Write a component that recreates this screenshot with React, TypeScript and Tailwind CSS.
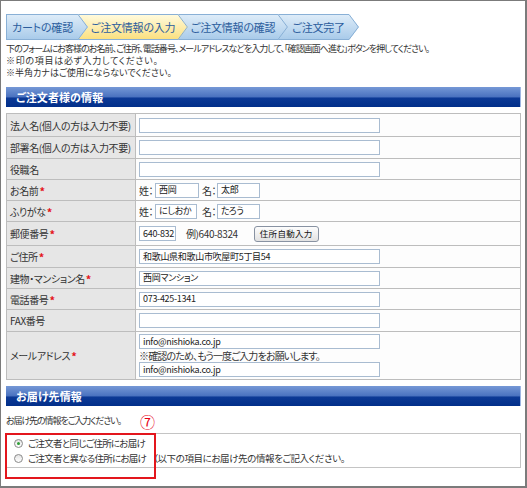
import React from "react";

type Tone = "blue" | "yellow";

const STOPS: Record<Tone, [string, string]> = {
  blue: ["#deecf8", "#a9cbea"],
  yellow: ["#fffadc", "#fbe07f"],
};

// Arrow-shaped joint between two breadcrumb steps
function Joint({ from, to, id }: { from: Tone; to: Tone | "none"; id: string }) {
  return (
    <svg width="10" height="26" viewBox="0 0 10 26" className="block shrink-0">
      <defs>
        <linearGradient id={`${id}-a`} x1="0" y1="0" x2="0" y2="1">
          <stop offset="0" stopColor={STOPS[from][0]} />
          <stop offset="1" stopColor={STOPS[from][1]} />
        </linearGradient>
        {to !== "none" && (
          <linearGradient id={`${id}-b`} x1="0" y1="0" x2="0" y2="1">
            <stop offset="0" stopColor={STOPS[to][0]} />
            <stop offset="1" stopColor={STOPS[to][1]} />
          </linearGradient>
        )}
      </defs>
      {to !== "none" && <rect x="0" y="0" width="10" height="26" fill={`url(#${id}-b)`} />}
      {to !== "none" && <path d="M0 0.5H10M0 25.5H10" stroke="#89b0d6" strokeWidth="1" />}
      <path d="M0 0L10 13L0 26Z" fill={`url(#${id}-a)`} />
      <path d="M0 0.5L9.4 13L0 25.5" fill="none" stroke="#89b0d6" strokeWidth="1" />
    </svg>
  );
}

function Step({ tone, className, children }: { tone: Tone; className: string; children: React.ReactNode }) {
  const bg =
    tone === "blue"
      ? "bg-linear-to-b from-[#deecf8] to-[#a9cbea]"
      : "bg-linear-to-b from-[#fffadc] to-[#fbe07f]";
  return (
    <div
      className={`h-[26px] border-y border-[#89b0d6] ${bg} flex items-center justify-center text-[11px] text-[#2c5d9d] tracking-[-0.2px] ${className}`}
    >
      {children}
    </div>
  );
}

function SectionBar({ children }: { children: React.ReactNode }) {
  return (
    <div className="h-[20px] flex items-center pl-[10px] bg-[linear-gradient(to_bottom,#7598d6_0%,#4b73c0_48%,#0c3995_56%,#022f8a_100%)] border-r border-[#9fb6e3] text-white text-[11px] font-bold tracking-[0.1px]">
      {children}
    </div>
  );
}

function Field({ className, children }: { className: string; children?: React.ReactNode }) {
  return (
    <div
      className={`h-[15px] border border-[#a9bcd1] bg-white flex items-center pl-[3px] overflow-hidden whitespace-nowrap text-[9px] text-[#222] tracking-[-0.3px] ${className}`}
    >
      {children}
    </div>
  );
}

function Req() {
  return <span className="text-[#e4151c] font-bold text-[11px] relative top-[1px] ml-[1px]">*</span>;
}

type Row = { label: string; req?: boolean; h: string; body: React.ReactNode };

const rows: Row[] = [
  { label: "法人名(個人の方は入力不要)", h: "h-[23px]", body: <Field className="w-[241px]" /> },
  { label: "部署名(個人の方は入力不要)", h: "h-[22px]", body: <Field className="w-[241px]" /> },
  { label: "役職名", h: "h-[21px]", body: <Field className="w-[241px]" /> },
  {
    label: "お名前",
    req: true,
    h: "h-[21px]",
    body: (
      <div className="flex items-center">
        <span className="w-[16px]">姓：</span>
        <Field className="w-[44px]">西岡</Field>
        <span className="w-[15px] ml-[3px]">名：</span>
        <Field className="w-[43px]">太郎</Field>
      </div>
    ),
  },
  {
    label: "ふりがな",
    req: true,
    h: "h-[21px]",
    body: (
      <div className="flex items-center">
        <span className="w-[16px]">姓：</span>
        <Field className="w-[42px]">にしおか</Field>
        <span className="w-[15px] ml-[5px]">名：</span>
        <Field className="w-[43px]">たろう</Field>
      </div>
    ),
  },
  {
    label: "郵便番号",
    req: true,
    h: "h-[24px]",
    body: (
      <div className="flex items-center">
        <Field className="w-[37px]">640-832</Field>
        <span className="ml-[10px]">例)640-8324</span>
        <button className="ml-[16px] h-[16px] w-[65px] rounded-[3px] border border-[#8892a2] bg-linear-to-b from-[#fdfdfd] to-[#e2e2e2] text-[8.5px] text-[#111] leading-none tracking-[0.3px]">
          住所自動入力
        </button>
      </div>
    ),
  },
  { label: "ご住所", req: true, h: "h-[22px]", body: <Field className="w-[241px]">和歌山県和歌山市吹屋町5丁目54</Field> },
  { label: "建物・マンション名", req: true, h: "h-[21px]", body: <Field className="w-[241px]">西岡マンション</Field> },
  { label: "電話番号", req: true, h: "h-[21px]", body: <Field className="w-[241px]">073-425-1341</Field> },
  { label: "FAX番号", h: "h-[22px]", body: <Field className="w-[241px]" /> },
  {
    label: "メールアドレス",
    req: true,
    h: "h-[48px]",
    body: (
      <div className="flex flex-col">
        <Field className="w-[241px]">info@nishioka.co.jp</Field>
        <div className="h-[13px] leading-[13px] tracking-[-0.85px]">※確認のため、もう一度ご入力をお願いします。</div>
        <Field className="w-[241px]">info@nishioka.co.jp</Field>
      </div>
    ),
  },
];

function Radio({ on }: { on?: boolean }) {
  return (
    <span className="w-[9px] h-[9px] rounded-full border border-[#8a8a8a] bg-linear-to-b from-[#e4e4e4] to-white flex items-center justify-center shrink-0">
      {on && <span className="w-[3px] h-[3px] rounded-full bg-[#2e9e36]" />}
    </span>
  );
}

export default function App() {
  return (
    <div className="w-[527px] h-[488px] overflow-hidden bg-white border-l border-t border-r-2 border-b-2 border-[#7b7b7b] pl-[5px] pr-[4px] pt-[13px] font-['Noto_Sans_CJK_JP',sans-serif] text-[#333] [font-feature-settings:'palt'] relative">
      {/* progress steps */}
      <div className="flex">
        <Step tone="blue" className="w-[72px] border-l">カートの確認</Step>
        <Joint from="blue" to="yellow" id="j1" />
        <Step tone="yellow" className="w-[90px]">ご注文情報の入力</Step>
        <Joint from="yellow" to="blue" id="j2" />
        <Step tone="blue" className="w-[90px]">ご注文情報の確認</Step>
        <Joint from="blue" to="blue" id="j3" />
        <Step tone="blue" className="w-[61px]">ご注文完了</Step>
        <Joint from="blue" to="none" id="j4" />
      </div>

      <div className="mt-[3px] text-[9px] leading-[12px] whitespace-nowrap">
        <p className="h-[12px] tracking-[-0.95px]">下のフォームにお客様のお名前、ご住所、電話番号、メールアドレスなどを入力して、「確認画面へ進む」ボタンを押してください。</p>
        <p className="h-[12px] tracking-[0.7px]">※印の項目は必ず入力してください。</p>
        <p className="h-[12px] tracking-[0px]">※半角カナはご使用にならないでください。</p>
      </div>

      <div className="mt-[8px]">
        <SectionBar>ご注文者様の情報</SectionBar>
      </div>

      {/* orderer form */}
      <div className="mt-[6px] grid grid-cols-[129px_1fr] border-t border-l border-[#bdbdbd] text-[10px] tracking-[-0.4px]">
        {rows.map((r) => (
          <React.Fragment key={r.label}>
            <div className={`${r.h} bg-[#e6e6e6] border-r border-b border-[#bdbdbd] pl-[3px] flex items-center whitespace-nowrap`}>
              {r.label}
              {r.req && <Req />}
            </div>
            <div className={`${r.h} bg-[#fdfdfd] border-r border-b border-[#bdbdbd] pl-[3px] flex items-center whitespace-nowrap`}>
              {r.body}
            </div>
          </React.Fragment>
        ))}
      </div>

      <div className="mt-[6px]">
        <SectionBar>お届け先情報</SectionBar>
      </div>

      <div className="mt-[8px] h-[14px] flex items-center whitespace-nowrap">
        <span className="text-[9px] tracking-[-1.1px]">お届け先の情報をご入力ください。</span>
      </div>

      {/* delivery choice */}
      <div className="mt-[5px] h-[35px] border border-[#c4c4c4] pt-[2px] pl-[7px] text-[9.5px] tracking-[-0.75px] whitespace-nowrap">
        <div className="h-[15px] flex items-center">
          <Radio on />
          <span className="ml-[5px]">ご注文者と同じご住所にお届け</span>
        </div>
        <div className="h-[15px] flex items-center">
          <Radio />
          <span className="ml-[5px]">ご注文者と異なる住所にお届け</span>
          <span className="ml-[7px] tracking-[-0.4px]">（以下の項目にお届け先の情報をご記入ください。</span>
        </div>
      </div>

      {/* step marker and highlight around the delivery options */}
      <span className="absolute left-[139px] top-[412px] text-[15px] leading-[18px] text-[#e60012]">⑦</span>
      <div className="absolute left-[4px] top-[432px] w-[151px] h-[46px] border-2 border-[#e3161d]" />
    </div>
  );
}
